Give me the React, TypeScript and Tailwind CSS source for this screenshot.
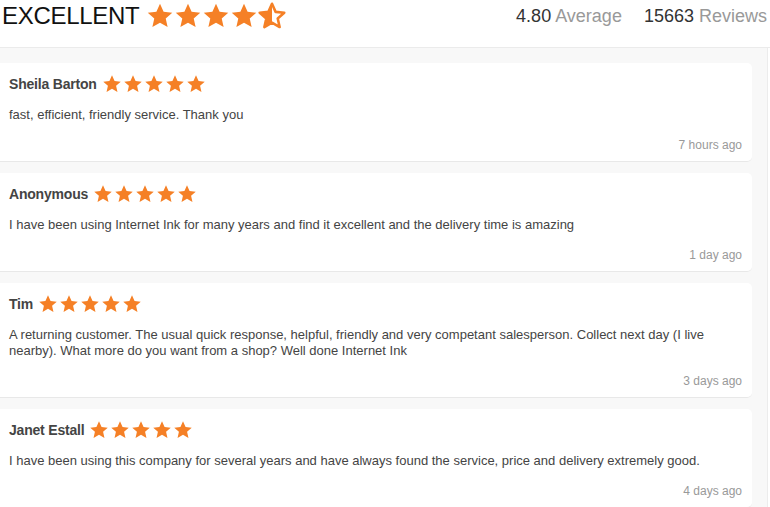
import React from 'react';

const STAR = 'M12 1.5l3.09 6.96 7.41.71-5.6 4.98 1.64 7.35L12 17.77 5.46 21.5l1.64-7.35-5.6-4.98 7.41-.71z';

function Star({ size, half = false }: { size: number; half?: boolean }) {
  return (
    <svg width={size} height={size} viewBox="0 0 24 24" className="shrink-0">
      {half ? (
        <>
          <defs>
            <clipPath id="half-left">
              <rect x="0" y="0" width="12" height="24" />
            </clipPath>
          </defs>
          <path d={STAR} fill="none" stroke="#f58026" strokeWidth="2.2" strokeLinejoin="round" />
          <path d={STAR} fill="#f58026" clipPath="url(#half-left)" />
        </>
      ) : (
        <path d={STAR} fill="#f58026" />
      )}
    </svg>
  );
}

type Review = { name: string; text: string; when: string };

const reviews: Review[] = [
  { name: 'Sheila Barton', text: 'fast, efficient, friendly service. Thank you', when: '7 hours ago' },
  {
    name: 'Anonymous',
    text: 'I have been using Internet Ink for many years and find it excellent and the delivery time is amazing',
    when: '1 day ago',
  },
  {
    name: 'Tim',
    text: 'A returning customer. The usual quick response, helpful, friendly and very competant salesperson. Collect next day (I live nearby). What more do you want from a shop? Well done Internet Ink',
    when: '3 days ago',
  },
  {
    name: 'Janet Estall',
    text: 'I have been using this company for several years and have always found the service, price and delivery extremely good.',
    when: '4 days ago',
  },
];

function ReviewCard({ review }: { review: Review }) {
  return (
    <div className="bg-white rounded-r-[5px] border-b border-[#e8e8e8] pl-[9px] pr-[10px] pt-[11px] pb-[8px]">
      <div className="flex items-center h-[20px]">
        <span className="text-[14px] font-bold text-[#444] tracking-[-0.2px]">{review.name}</span>
        <div className="flex ml-[5px] gap-[1px]">
          {[0, 1, 2, 3, 4].map((i) => (
            <Star key={i} size={20} />
          ))}
        </div>
      </div>
      <p className="mt-[13px] text-[13px] leading-[16px] text-[#444] pr-[2px]">{review.text}</p>
      <div className="mt-[14px] text-right text-[12px] leading-[16px] text-[#999]">{review.when}</div>
    </div>
  );
}

export default function App() {
  return (
    <div
      className="w-[770px] h-[507px] overflow-hidden bg-white"
      style={{ fontFamily: '"Liberation Sans", Arial, sans-serif' }}
    >
      <header className="flex items-center h-[48px] border-b border-[#ebebeb] pb-[15px]">
        <div className="flex items-center pl-[2px]">
          <span className="text-[24px] leading-[32px] text-[#111] tracking-[-0.3px]">EXCELLENT</span>
          <div className="flex ml-[7px]">
            {[0, 1, 2, 3].map((i) => (
              <Star key={i} size={28} />
            ))}
            <Star size={28} half />
          </div>
        </div>
        <div className="ml-auto flex items-center gap-[22px] pr-[3px] text-[18px] leading-[32px]">
          <span>
            <span className="text-[#333]">4.80</span> <span className="text-[#999]">Average</span>
          </span>
          <span>
            <span className="text-[#333]">15663</span> <span className="text-[#999]">Reviews</span>
          </span>
        </div>
      </header>
      <div className="h-[459px] bg-[#f8f8f8] border-r border-[#ececec] mr-[2px] pt-[15px] pr-[15px] flex flex-col gap-[11px]">
        {reviews.map((r) => (
          <ReviewCard key={r.name} review={r} />
        ))}
      </div>
    </div>
  );
}
